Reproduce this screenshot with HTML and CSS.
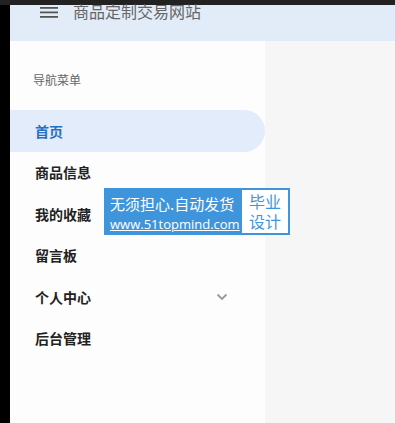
FILE: index.html
```
<html lang="zh">
<head>
    <meta charset="UTF-8">
    <meta name="viewport" content="width=device-width, initial-scale=1.0">
    <title>商品定制交易网站</title>
    <link rel="stylesheet" href="styles.css">
</head>
<body>
    <div class="top-strip"></div>
    <div class="frame">
        <div class="left-edge"></div>
        <div class="app">
            <header class="app-header">
                <svg class="menu-icon" width="18" height="12" viewBox="0 0 18 12">
                    <rect x="0" y="0" width="18" height="1.8" fill="#555"></rect>
                    <rect x="0" y="4.5" width="18" height="1.8" fill="#555"></rect>
                    <rect x="0" y="9" width="18" height="1.8" fill="#555"></rect>
                </svg>
                <span class="site-title">商品定制交易网站</span>
            </header>
            <div class="app-body">
                <nav class="sidebar">
                    <div class="nav-caption">导航菜单</div>
                    <ul class="nav-list">
                        <li class="nav-item active">首页</li>
                        <li class="nav-item">商品信息</li>
                        <li class="nav-item">我的收藏</li>
                        <li class="nav-item">留言板</li>
                        <li class="nav-item has-sub">
                            <span>个人中心</span>
                            <svg class="chevron" width="12" height="8" viewBox="0 0 12 8">
                                <path d="M1.5 1.5 L6 6 L10.5 1.5" fill="none" stroke="#9a9a9a" stroke-width="1.8"></path>
                            </svg>
                        </li>
                        <li class="nav-item">后台管理</li>
                    </ul>
                </nav>
                <main class="content"></main>
            </div>
        </div>
    </div>

    <div class="promo">
        <div class="promo-text">
            <div class="promo-line">无须担心.自动发货</div>
            <div class="promo-url">www.51topmind.com</div>
        </div>
        <div class="promo-badge">
            <div>毕业</div>
            <div>设计</div>
        </div>
    </div>
</body>
</html>
```

FILE: styles.css
```
body {
    margin: 0;
    font-family: "Noto Sans CJK SC", "Noto Sans", sans-serif;
    background-color: #000;
    height: 423px;
    overflow: hidden;
    display: flex;
    flex-direction: column;
}

.top-strip {
    height: 5px;
    background-color: #222;
}

.frame {
    flex: 1;
    display: flex;
}

.left-edge {
    width: 10px;
    background-color: #000;
}

.app {
    flex: 1;
    display: flex;
    flex-direction: column;
}

.app-header {
    height: 36px;
    background-color: #e2ecf9;
    display: flex;
    align-items: flex-start;
    padding-left: 30px;
    box-sizing: border-box;
}

.menu-icon {
    margin-top: 2px;
}

.site-title {
    margin-left: 15px;
    font-size: 16px;
    line-height: 16px;
    color: #666;
    margin-top: -2px;
}

.app-body {
    flex: 1;
    display: flex;
}

.sidebar {
    width: 255px;
    background-color: #fdfdfd;
}

.content {
    flex: 1;
    background-color: #f6f6f6;
}

.nav-caption {
    font-size: 12px;
    color: #666;
    padding-left: 23px;
    margin-top: 31px;
    line-height: 16px;
}

.nav-list {
    list-style: none;
    margin: 22px 0 0 0;
    padding: 0;
}

.nav-item {
    height: 41.5px;
    display: flex;
    align-items: center;
    justify-content: space-between;
    padding: 0 37px 0 25px;
    font-size: 14px;
    font-weight: bold;
    color: #222;
}

.nav-item.active {
    background-color: #e2ecfa;
    color: #2470c4;
    border-radius: 0 21px 21px 0;
}

.promo {
    position: absolute;
    left: 104px;
    top: 188px;
    width: 186px;
    height: 47px;
    background-color: #3f95dc;
    display: flex;
    align-items: stretch;
    padding: 2px;
    box-sizing: border-box;
}

.promo-text {
    flex: 1;
    color: #fff;
    padding: 3px 0 0 4px;
}

.promo-line {
    font-size: 15px;
    line-height: 22px;
}

.promo-url {
    font-size: 13px;
    line-height: 18px;
    text-decoration: underline;
    font-family: "Open Sans", sans-serif;
}

.promo-badge {
    width: 46px;
    background-color: #fff;
    color: #3f95dc;
    font-size: 16px;
    line-height: 19.5px;
    text-align: center;
    padding-top: 2px;
    box-sizing: border-box;
}
```
